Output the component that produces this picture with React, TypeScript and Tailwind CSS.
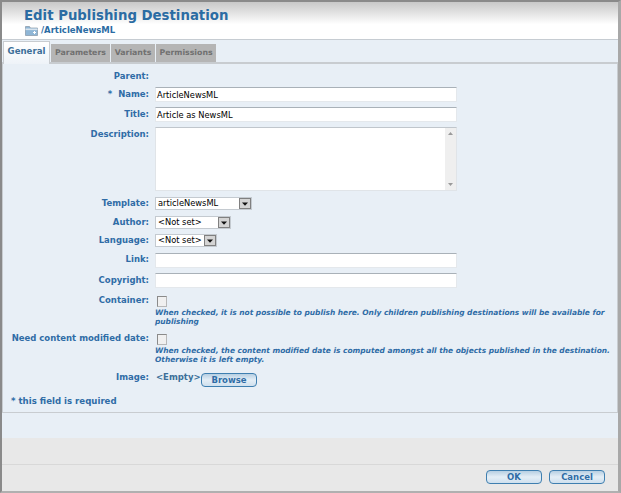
const font = "font-['DejaVu_Sans',Verdana,sans-serif]";

function Label({ children, className = "" }: { children: React.ReactNode; className?: string }) {
  return (
    <div className={`w-[146px] shrink-0 whitespace-nowrap text-right text-[8.5px] font-bold leading-[12px] text-[#2f6ca6] ${className}`}>
      {children}
    </div>
  );
}

function TextBox({ value = "" }: { value?: string }) {
  return (
    <div className="h-[15px] w-[302px] border border-[#e4e8ec] border-t-[#a9b1b8] bg-white pl-[1px] text-[8.3px] leading-[14px] text-black">
      {value}
    </div>
  );
}

function Select({ value, width }: { value: string; width: number }) {
  return (
    <div className="flex h-[13px] items-stretch border border-[#c4cad0] bg-white" style={{ width }}>
      <div className="flex-1 whitespace-nowrap pl-[2px] text-[8.3px] leading-[11px] text-black">{value}</div>
      <div className="flex w-[12px] items-center justify-center border border-[#808080] bg-[#d4d4d4]">
        <svg width="6" height="4" viewBox="0 0 6 4"><path d="M0 0.5h6L3 3.8z" fill="#111" /></svg>
      </div>
    </div>
  );
}

function Check() {
  return <div className="h-[11px] w-[10px] border border-[#8a8a8a] border-r-[#b8b8b8] border-b-[#b8b8b8] bg-[#f0f0f0]" />;
}

function Tab({ children, active, w }: { children: React.ReactNode; active?: boolean; w: string }) {
  return active ? (
    <div className={`z-10 -mb-[2px] flex h-[23px] ${w} items-center justify-center border border-b-0 border-[#c8ccd0] bg-gradient-to-b from-white to-[#eef3f8] pb-[3px] text-[8.6px] font-bold text-[#3c6f99]`}>
      {children}
    </div>
  ) : (
    <div className={`ml-px flex h-[18px] ${w} items-center justify-center bg-[#b5b5b5] text-[7.8px] font-bold text-[#707070]`}>
      {children}
    </div>
  );
}

function Btn({ children, w }: { children: React.ReactNode; w: string }) {
  return (
    <div className={`flex h-[14px] ${w} items-center justify-center rounded-[4px] border border-[#3f7fb0] bg-gradient-to-b from-[#b7cfe2] via-[#e4eef6] to-[#cfe0ee] text-[8.5px] font-bold leading-none text-[#2f6ca6]`}>
      {children}
    </div>
  );
}

export default function App() {
  return (
    <div className={`${font} flex h-[493px] w-[621px] flex-col overflow-hidden border-2 border-r-[3px] border-[#8a8a8a] border-b-[#b0b0b0] border-r-[#a8a8a8] bg-white`}>
      <div className="h-[38px] shrink-0 border-b border-[#c6ccd2] bg-gradient-to-b from-[#c8c8c8] via-white via-60% to-white pl-[22px] pt-[6px]">
        <div className="text-[13.3px] font-bold leading-[16px] text-[#2b6ca3]">Edit Publishing Destination</div>
        <div className="flex items-center gap-[3px] pl-[1px] text-[8.5px] font-bold leading-[12px] text-[#2b6ca3]">
          <svg width="13" height="11" viewBox="0 0 13 11">
            <path d="M0.5 1.5h4l1 1.5h7v7.5h-12z" fill="#8fb6d6" stroke="#7a8a98" strokeWidth="0.6" />
            <rect x="0.5" y="3.5" width="12" height="1.6" fill="#d8e4ee" />
            <path d="M8 7.5h3M9.5 6v3" stroke="#fff" strokeWidth="1" />
          </svg>
          <span>/ArticleNewsML</span>
        </div>
      </div>

      <div className="flex h-[22px] shrink-0 items-end bg-[#e8eff6] pl-px">
        <Tab active w="w-[47px]">General</Tab>
        <Tab w="w-[59px]">Parameters</Tab>
        <Tab w="w-[44px]">Variants</Tab>
        <Tab w="w-[60px]">Permissions</Tab>
      </div>

      <div className="h-[351px] shrink-0 border border-t-2 border-[#c8ccd0] bg-[#e8eff6] pt-[6px]">
        <div className="flex h-[17px] gap-[6px]">
          <Label>Parent:</Label>
        </div>
        <div className="flex h-[20px] items-start gap-[6px]">
          <Label className="pt-[1px]">
            <span className="mr-[6px]">*</span>Name:
          </Label>
          <TextBox value="ArticleNewsML" />
        </div>
        <div className="flex h-[20px] items-start gap-[6px]">
          <Label className="pt-[1px]">Title:</Label>
          <TextBox value="Article as NewsML" />
        </div>
        <div className="flex h-[70px] items-start gap-[6px]">
          <Label className="pt-[1px]">Description:</Label>
          <div className="flex h-[64px] w-[302px] border border-[#e0e4e8] border-t-[#c0c6cc] bg-white">
            <div className="flex-1" />
            <div className="flex w-[11px] flex-col items-center justify-between bg-[#efefef] py-[4px]">
              <svg width="5" height="3" viewBox="0 0 5 3"><path d="M0 3h5L2.5 0z" fill="#9a9a9a" /></svg>
              <svg width="5" height="3" viewBox="0 0 5 3"><path d="M0 0h5L2.5 3z" fill="#9a9a9a" /></svg>
            </div>
          </div>
        </div>
        <div className="flex h-[19px] items-start gap-[6px]">
          <Label>Template:</Label>
          <Select value="articleNewsML" width={97} />
        </div>
        <div className="flex h-[18px] items-start gap-[6px]">
          <Label>Author:</Label>
          <Select value="<Not set>" width={76} />
        </div>
        <div className="flex h-[19px] items-start gap-[6px]">
          <Label>Language:</Label>
          <Select value="<Not set>" width={62} />
        </div>
        <div className="flex h-[20px] items-start gap-[6px]">
          <Label>Link:</Label>
          <TextBox />
        </div>
        <div className="flex h-[21px] items-start gap-[6px]">
          <Label className="pt-[1px]">Copyright:</Label>
          <TextBox />
        </div>
        <div className="flex h-[38px] items-start gap-[6px]">
          <Label>Container:</Label>
          <div className="w-[458px]">
            <div className="pl-[2px] pt-[2px]"><Check /></div>
            <div className="mt-px whitespace-nowrap text-[7.45px] font-bold italic leading-[9px] text-[#2f6ca6]">
              When checked, it is not possible to publish here. Only children publishing destinations will be available for
              <br />
              publishing
            </div>
          </div>
        </div>
        <div className="flex h-[39px] items-start gap-[6px]">
          <Label>Need content modified date:</Label>
          <div className="w-[458px]">
            <div className="pl-[2px] pt-[2px]"><Check /></div>
            <div className="mt-px whitespace-nowrap text-[7.45px] font-bold italic leading-[9px] text-[#2f6ca6]">
              When checked, the content modified date is computed amongst all the objects published in the destination.
              <br />
              Otherwise it is left empty.
            </div>
          </div>
        </div>
        <div className="flex h-[24px] items-start gap-[6px]">
          <Label>Image:</Label>
          <div className="flex items-start">
            <span className="w-[46px] pl-px text-[8.5px] font-bold leading-[12px] text-[#3c6f99]">&lt;Empty&gt;</span>
            <div className="mt-[2px]"><Btn w="w-[56px]">Browse</Btn></div>
          </div>
        </div>
        <div className="pl-[8px] text-[8.6px] font-bold leading-[12px] text-[#2f6ca6]">* this field is required</div>
      </div>

      <div className="h-[25px] shrink-0 bg-[#e8eff6]" />
      <div className="h-[27px] shrink-0 border-b border-[#d8d8d8] bg-[#e8e8e8]" />
      <div className="flex flex-1 items-start justify-end gap-[7px] bg-[#e8e8e8] pr-[13px] pt-[5px]">
        <Btn w="w-[56px]">OK</Btn>
        <Btn w="w-[56px]">Cancel</Btn>
      </div>
    </div>
  );
}
